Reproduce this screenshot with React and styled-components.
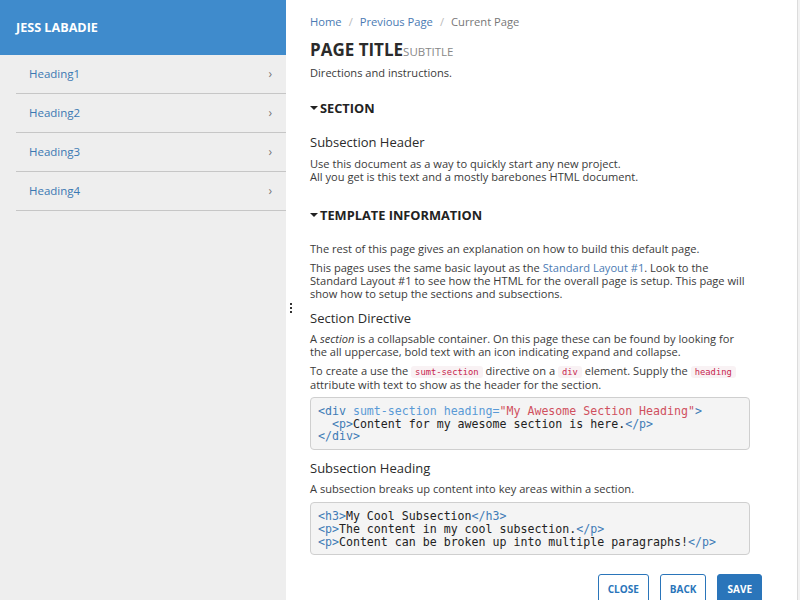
import React from 'react';
import styled, { createGlobalStyle } from 'styled-components';

const GlobalStyle = createGlobalStyle`
  html, body {
    margin: 0;
    padding: 0;
    height: 100%;
    overflow: hidden;
    background: #f2f2f2;
  }
  body {
    font-family: "Open Sans", "Liberation Sans", sans-serif;
    color: #333;
  }
`;

const Shell = styled.div`
  display: flex;
  width: 800px;
  height: 600px;
  overflow: hidden;
`;

const Sidebar = styled.aside`
  width: 286px;
  flex: none;
  background: #eeeeee;
  display: flex;
  flex-direction: column;
`;

const Brand = styled.div`
  height: 55px;
  box-sizing: border-box;
  display: flex;
  align-items: center;
  padding: 0 0 0 16px;
  background: #3f8bcc;
  color: #fff;
  font-weight: 700;
  font-size: 12.6px;
`;

const NavList = styled.ul`
  list-style: none;
  margin: 0;
  padding: 0 0 0 16px;
`;

const NavItem = styled.li`
  display: flex;
  align-items: center;
  justify-content: space-between;
  padding: 0 14px 1px 13px;
  box-sizing: border-box;
  height: 39px;
  border-bottom: 1px solid #c6c6c6;
  color: #3b78b2;
  font-size: 11.5px;
`;

const Chevron = styled.span`
  color: #777;
  font-size: 12px;
`;

const Main = styled.main`
  position: relative;
  flex: 1;
  background: #fff;
  border-right: 1px solid #dcdcdc;
  margin-right: 2px;
  padding: 13px 0 0 24px;
`;

const Grip = styled.div`
  position: absolute;
  left: 4px;
  top: 303px;
  display: flex;
  flex-direction: column;
  gap: 2px;
  span {
    width: 2px;
    height: 2px;
    background: #333;
  }
`;

const Content = styled.div`
  width: 440px;
`;

const Crumbs = styled.nav`
  display: flex;
  gap: 7px;
  font-size: 11.2px;
  line-height: 18px;
  color: #777;
`;

const Crumb = styled.span`
  color: ${(p) => (p.$link ? '#4a7ab3' : '#777')};
`;

const Sep = styled.span`
  color: #bbb;
`;

const Title = styled.h1`
  margin: 8px 0 0;
  font-size: 17px;
  line-height: 22px;
  font-weight: 700;
  color: #2b2b2b;
`;

const Subtitle = styled.small`
  font-size: 11.5px;
  font-weight: 400;
  color: #888;
`;

const Lead = styled.p`
  margin: 3px 0 0;
  font-size: 11.1px;
  line-height: 14px;
  color: #3a3a3a;
`;

const SectionHead = styled.h2`
  display: flex;
  align-items: center;
  gap: 2px;
  margin: ${(p) => p.$top}px 0 0;
  font-size: 12.8px;
  line-height: 18px;
  font-weight: 700;
  color: #222;
`;

const Caret = styled.span`
  width: 0;
  height: 0;
  border-left: 4px solid transparent;
  border-right: 4px solid transparent;
  border-top: 4px solid #222;
`;

const SubHead = styled.h3`
  margin: ${(p) => p.$top}px 0 0;
  font-size: 13px;
  line-height: 18px;
  font-weight: 500;
  color: #2b2b2b;
`;

const Para = styled.p`
  margin: ${(p) => p.$top}px 0 0;
  font-size: 11.1px;
  line-height: 13.3px;
  color: #3a3a3a;
`;

const Link = styled.span`
  color: #4a7ab3;
`;

const Code = styled.code`
  font-family: "DejaVu Sans Mono", "Liberation Mono", monospace;
  font-size: 8.8px;
  line-height: 1;
  padding: 1px 4px;
  color: #c7254e;
  background: #f9f2f4;
  border-radius: 3px;
`;

const Pre = styled.pre`
  margin: ${(p) => p.$top}px 0 0;
  padding: 7px 7px 6px;
  background: #f4f4f4;
  border: 1px solid #cfcfcf;
  border-radius: 4px;
  font-family: "DejaVu Sans Mono", "Liberation Mono", monospace;
  font-size: 11.6px;
  line-height: 12.7px;
  color: #222;
  white-space: pre;
`;

const Tag = styled.span`
  color: #3f7bb6;
`;

const Attr = styled.span`
  color: #5a9ad6;
`;

const Str = styled.span`
  color: #d0505e;
`;

const Actions = styled.div`
  display: flex;
  justify-content: flex-end;
  gap: 11px;
  width: 452px;
  margin-top: 19px;
`;

const Button = styled.button`
  height: 30px;
  padding: 0 9px;
  border: 1.5px solid #2a75ba;
  border-radius: 3px;
  background: ${(p) => (p.$primary ? '#2a75ba' : '#fff')};
  color: ${(p) => (p.$primary ? '#fff' : '#2a75ba')};
  font-family: "Open Sans", "Liberation Sans", sans-serif;
  font-size: 10px;
  font-weight: 700;
`;

const navItems = ['Heading1', 'Heading2', 'Heading3', 'Heading4'];

export default function App() {
  return (
    <>
      <GlobalStyle />
      <Shell>
        <Sidebar>
          <Brand>JESS LABADIE</Brand>
          <NavList>
            {navItems.map((n) => (
              <NavItem key={n}>
                {n}
                <Chevron>›</Chevron>
              </NavItem>
            ))}
          </NavList>
        </Sidebar>
        <Main>
          <Grip>
            <span />
            <span />
            <span />
          </Grip>
          <Content>
            <Crumbs>
              <Crumb $link>Home</Crumb>
              <Sep>/</Sep>
              <Crumb $link>Previous Page</Crumb>
              <Sep>/</Sep>
              <Crumb>Current Page</Crumb>
            </Crumbs>
            <Title>
              PAGE TITLE<Subtitle>SUBTITLE</Subtitle>
            </Title>
            <Lead>Directions and instructions.</Lead>

            <SectionHead $top={19}>
              <Caret />
              SECTION
            </SectionHead>
            <SubHead $top={16}>Subsection Header</SubHead>
            <Para $top={6}>
              Use this document as a way to quickly start any new project.
              <br />
              All you get is this text and a mostly barebones HTML document.
            </Para>

            <SectionHead $top={22}>
              <Caret />
              TEMPLATE INFORMATION
            </SectionHead>
            <Para $top={18}>The rest of this page gives an explanation on how to build this default page.</Para>
            <Para $top={6}>
              This pages uses the same basic layout as the <Link>Standard Layout #1</Link>. Look to the Standard
              Layout #1 to see how the HTML for the overall page is setup. This page will show how to setup the
              sections and subsections.
            </Para>

            <SubHead $top={8}>Section Directive</SubHead>
            <Para $top={5}>
              A <em>section</em> is a collapsable container. On this page these can be found by looking for the all
              uppercase, bold text with an icon indicating expand and collapse.
            </Para>
            <Para $top={6}>
              To create a use the <Code>sumt-section</Code> directive on a <Code>div</Code> element. Supply the{' '}
              <Code>heading</Code> attribute with text to show as the header for the section.
            </Para>
            <Pre $top={6}>
              <Tag>&lt;div</Tag> <Attr>sumt-section heading=</Attr>
              <Str>"My Awesome Section Heading"</Str>
              <Tag>&gt;</Tag>
              {'\n  '}
              <Tag>&lt;p&gt;</Tag>Content for my awesome section is here.<Tag>&lt;/p&gt;</Tag>
              {'\n'}
              <Tag>&lt;/div&gt;</Tag>
            </Pre>

            <SubHead $top={9}>Subsection Heading</SubHead>
            <Para $top={5}>A subsection breaks up content into key areas within a section.</Para>
            <Pre $top={7}>
              <Tag>&lt;h3&gt;</Tag>My Cool Subsection<Tag>&lt;/h3&gt;</Tag>
              {'\n'}
              <Tag>&lt;p&gt;</Tag>The content in my cool subsection.<Tag>&lt;/p&gt;</Tag>
              {'\n'}
              <Tag>&lt;p&gt;</Tag>Content can be broken up into multiple paragraphs!<Tag>&lt;/p&gt;</Tag>
            </Pre>
          </Content>
          <Actions>
            <Button>CLOSE</Button>
            <Button>BACK</Button>
            <Button $primary>SAVE</Button>
          </Actions>
        </Main>
      </Shell>
    </>
  );
}
